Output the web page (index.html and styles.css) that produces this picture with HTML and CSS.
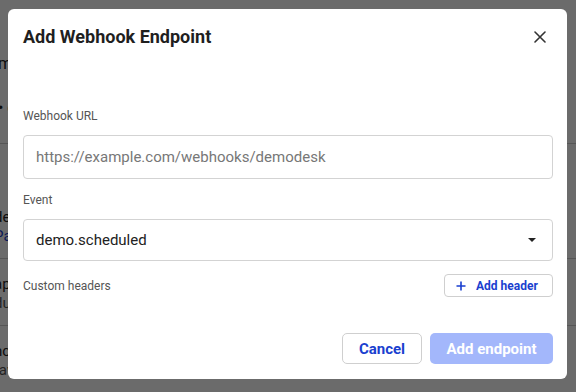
FILE: index.html
```html
<!DOCTYPE html>
<html lang="en">
<head>
    <meta charset="UTF-8">
    <meta name="viewport" content="width=device-width, initial-scale=1.0">
    <title>Webhooks</title>
    <link rel="stylesheet" href="styles.css">
</head>
<body>
    <div class="page">
        <p class="row row-intro">manage webhooks</p>
        <p class="row row-bullet">• events</p>
        <div class="row row-item">
            <p>demo endpoint</p>
            <p class="link">Pause</p>
        </div>
        <div class="row row-item">
            <p>app endpoint</p>
            <p class="muted">duration</p>
        </div>
        <div class="row row-item">
            <p>nc endpoint</p>
            <p class="muted">raw</p>
        </div>
    </div>

    <div class="backdrop">
        <div class="modal">
            <div class="modal-header">
                <h2>Add Webhook Endpoint</h2>
                <button class="close" aria-label="Close">
                    <svg width="12" height="12" viewBox="0 0 12 12"><path d="M1 1L11 11M11 1L1 11" stroke="#333" stroke-width="1.6" stroke-linecap="round"/></svg>
                </button>
            </div>

            <div class="modal-body">
                <div class="field">
                    <label for="url">Webhook URL</label>
                    <input type="text" id="url" placeholder="https://example.com/webhooks/demodesk">
                </div>
                <div class="field">
                    <label>Event</label>
                    <div class="select">
                        <span>demo.scheduled</span>
                        <svg width="8" height="4" viewBox="0 0 8 4"><path d="M0 0H8L4 4Z" fill="#222"/></svg>
                    </div>
                </div>
                <div class="headers-row">
                    <span class="label">Custom headers</span>
                    <button class="btn-small">
                        <svg width="10" height="10" viewBox="0 0 10 10"><path d="M5 0.5V9.5M0.5 5H9.5" stroke="#1a3fcf" stroke-width="1.6"/></svg>
                        Add header
                    </button>
                </div>
            </div>

            <div class="modal-footer">
                <button class="btn btn-outline">Cancel</button>
                <button class="btn btn-primary" disabled>Add endpoint</button>
            </div>
        </div>
    </div>
</body>
</html>
```

FILE: styles.css
```css
body {
    margin: 0;
    font-family: Roboto, "Liberation Sans", sans-serif;
    background: #fff;
    color: #222;
}
p {
    margin: 0;
}
.page {
    padding-top: 54px;
}
.row {
    font-size: 16px;
    line-height: 20px;
}
.row-intro {
    margin-left: -2px;
}
.row-bullet {
    margin-top: 24px;
    margin-left: -2px;
    padding-bottom: 25px;
    border-bottom: 1px solid #ccc;
}
.row-item {
    padding: 64px 0 12px;
    margin-left: -6px;
    border-bottom: 1px solid #ccc;
    font-size: 15px;
    line-height: 19px;
}
.row-item + .row-item {
    padding-top: 16px;
}
.link {
    color: #1a3fcf;
}
.muted {
    color: #555;
}

.backdrop {
    position: fixed;
    inset: 0;
    background: rgba(0, 0, 0, 0.58);
    padding: 9px 0 0 8px;
}
.modal {
    width: 559px;
    height: 370px;
    box-sizing: border-box;
    background: #fff;
    border-radius: 6px;
    padding: 15px 14px 15px 15px;
    display: flex;
    flex-direction: column;
}
.modal-header {
    display: flex;
    justify-content: space-between;
    align-items: center;
}
.modal-header h2 {
    margin: 0;
    font-size: 18px;
    line-height: 24px;
    font-weight: 700;
    color: #1f1f1f;
}
.close {
    width: 24px;
    height: 24px;
    margin-right: 1px;
    margin-top: 1px;
    border: none;
    background: none;
    padding: 0;
    display: flex;
    align-items: center;
    justify-content: center;
}
.modal-body {
    margin-top: 59px;
}
.field label, .label {
    display: block;
    font-size: 12px;
    line-height: 16px;
    color: #555;
}
.field label {
    margin-bottom: 11px;
}
.field + .field {
    margin-top: 13px;
}
.field input, .select {
    width: 100%;
    box-sizing: border-box;
    border: 1px solid #d3d3d3;
    border-radius: 4px;
    padding: 0 12px;
    font-family: Roboto, "Liberation Sans", sans-serif;
    font-size: 15px;
    color: #222;
}
.field input {
    height: 44px;
    outline: none;
}
.field input::placeholder {
    color: #777;
}
.select {
    height: 42px;
    display: flex;
    align-items: center;
    justify-content: space-between;
    padding-right: 16px;
}
.headers-row {
    margin-top: 13px;
    display: flex;
    justify-content: space-between;
    align-items: center;
}
.btn-small {
    width: 109px;
    height: 23px;
    border: 1px solid #cfcfcf;
    border-radius: 4px;
    background: #fff;
    display: flex;
    align-items: center;
    gap: 10px;
    padding: 0 0 0 11px;
    font-family: Roboto, "Liberation Sans", sans-serif;
    font-size: 12px;
    font-weight: 700;
    color: #1a3fcf;
}
.modal-footer {
    margin-top: auto;
    display: flex;
    justify-content: flex-end;
    gap: 8px;
}
.btn {
    height: 31px;
    border-radius: 5px;
    font-family: Roboto, "Liberation Sans", sans-serif;
    font-size: 15px;
    font-weight: 700;
}
.btn-outline {
    width: 80px;
    background: #fff;
    border: 1px solid #cfcfcf;
    color: #1a3fcf;
}
.btn-primary {
    width: 123px;
    background: #a3b7fb;
    border: none;
    color: #fff;
}
```
